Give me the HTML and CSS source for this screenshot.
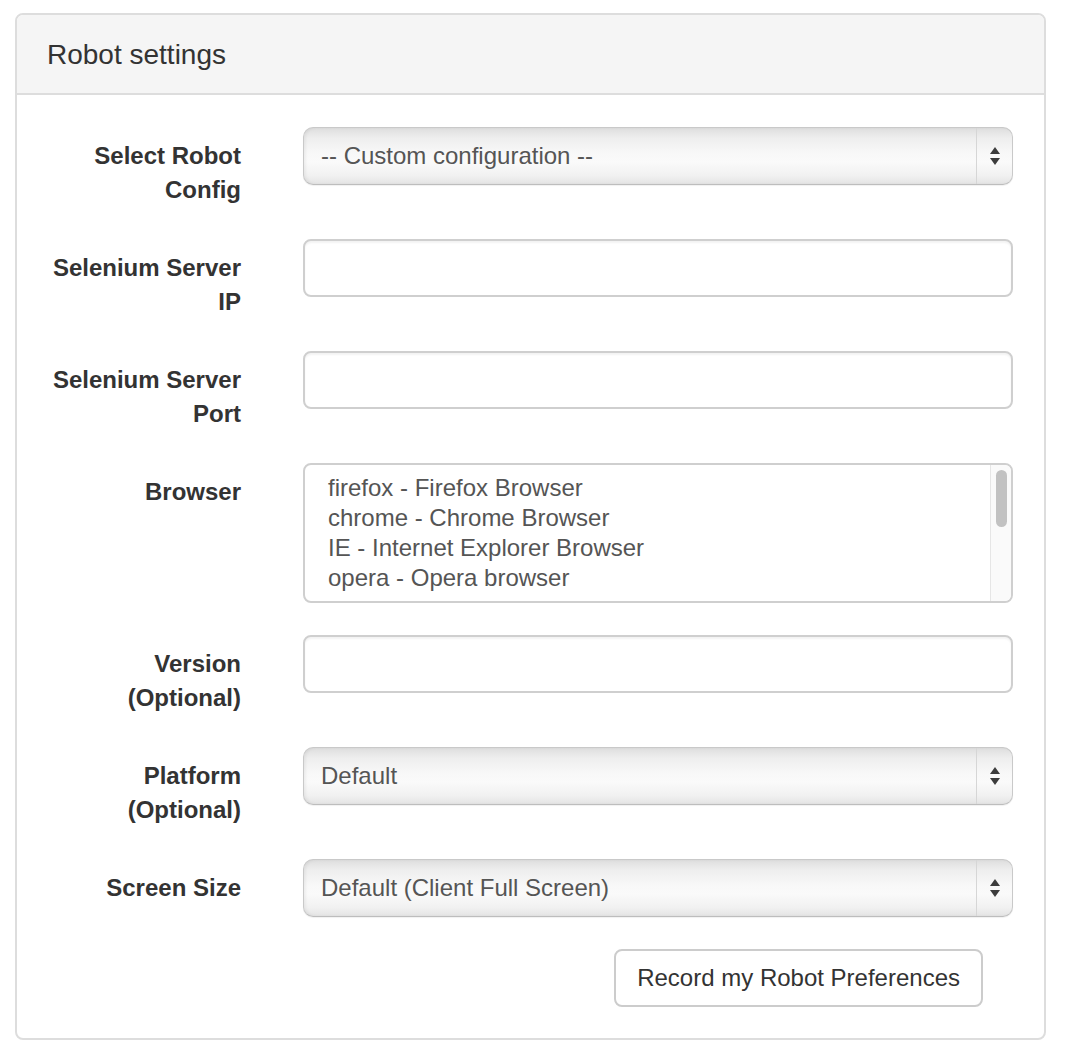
FILE: index.html
```html
<!DOCTYPE html>
<html lang="en">
<head>
<meta charset="utf-8">
<title>Robot settings</title>
<link rel="stylesheet" href="styles.css">
</head>
<body>
<div class="panel">
  <div class="panel-heading"><h3 class="panel-title">Robot settings</h3></div>
  <form class="panel-body">
    <div class="form-row">
      <label class="form-label">Select Robot Config</label>
      <div class="fake-select">
        <span class="select-value">-- Custom configuration --</span>
        <span class="select-arrows"><svg width="12" height="20" viewBox="0 0 12 20"><polygon points="6,0 11,7 1,7" fill="#3c3c3c"/><polygon points="1,11 11,11 6,18" fill="#3c3c3c"/></svg></span>
      </div>
    </div>
    <div class="form-row">
      <label class="form-label">Selenium Server IP</label>
      <input class="text-input" type="text">
    </div>
    <div class="form-row">
      <label class="form-label">Selenium Server Port</label>
      <input class="text-input" type="text">
    </div>
    <div class="form-row">
      <label class="form-label">Browser</label>
      <div class="listbox">
        <div class="listbox-options">
          <div class="option">firefox - Firefox Browser</div>
          <div class="option">chrome - Chrome Browser</div>
          <div class="option">IE - Internet Explorer Browser</div>
          <div class="option">opera - Opera browser</div>
        </div>
        <div class="listbox-scrollbar"><div class="scroll-thumb"></div></div>
      </div>
    </div>
    <div class="form-row">
      <label class="form-label">Version (Optional)</label>
      <input class="text-input" type="text">
    </div>
    <div class="form-row">
      <label class="form-label">Platform (Optional)</label>
      <div class="fake-select">
        <span class="select-value">Default</span>
        <span class="select-arrows"><svg width="12" height="20" viewBox="0 0 12 20"><polygon points="6,0 11,7 1,7" fill="#3c3c3c"/><polygon points="1,11 11,11 6,18" fill="#3c3c3c"/></svg></span>
      </div>
    </div>
    <div class="form-row">
      <label class="form-label">Screen Size</label>
      <div class="fake-select">
        <span class="select-value">Default (Client Full Screen)</span>
        <span class="select-arrows"><svg width="12" height="20" viewBox="0 0 12 20"><polygon points="6,0 11,7 1,7" fill="#3c3c3c"/><polygon points="1,11 11,11 6,18" fill="#3c3c3c"/></svg></span>
      </div>
    </div>
    <div class="button-row">
      <button class="btn" type="button">Record my Robot Preferences</button>
    </div>
  </form>
</div>
</body>
</html>
```
FILE: styles.css
```css
* { box-sizing: border-box; }

body {
  margin: 0;
  background: #ffffff;
  font-family: "Liberation Sans", Arial, Helvetica, sans-serif;
  color: #333333;
}

.panel {
  width: 1031px;
  margin: 13px 0 0 15px;
  border: 2px solid #dddddd;
  border-radius: 8px;
  background: #ffffff;
  overflow: hidden;
}

.panel-heading {
  height: 80px;
  padding: 0 30px;
  display: flex;
  align-items: center;
  background: #f5f5f5;
  border-bottom: 2px solid #dddddd;
}

.panel-title {
  margin: 0;
  padding-top: 2px;
  font-size: 28px;
  font-weight: normal;
  color: #333333;
  line-height: 1.1;
}

.panel-body {
  margin: 0;
  padding: 32px 31px 31px 30px;
}

.form-row {
  display: grid;
  grid-template-columns: 194px 1fr;
  column-gap: 62px;
  align-items: start;
  margin-bottom: 32px;
}

.form-label {
  padding-top: 12px;
  text-align: right;
  font-weight: bold;
  font-size: 24px;
  line-height: 34px;
  color: #333333;
}

.text-input {
  display: block;
  width: 100%;
  height: 58px;
  margin: 0;
  padding: 0 18px;
  font: inherit;
  font-size: 24px;
  color: #555555;
  background: #ffffff;
  border: 2px solid #cfcfcf;
  border-radius: 8px;
  box-shadow: inset 0 2px 2px rgba(0, 0, 0, 0.05);
}

.fake-select {
  display: flex;
  height: 58px;
  border: 1px solid #c9c9c9;
  border-bottom-color: #bdbdbd;
  border-radius: 10px;
  background: linear-gradient(to bottom, #dedede 0%, #eeeeee 18%, #f8f8f8 45%, #fafafa 60%, #f1f1f1 85%, #e4e4e4 100%);
  box-shadow: inset 2px 0 3px rgba(0, 0, 0, 0.05), 0 1px 1px rgba(0, 0, 0, 0.06);
}

.select-value {
  flex: 1;
  display: flex;
  align-items: center;
  padding-left: 17px;
  font-size: 24px;
  color: #555555;
}

.select-arrows {
  width: 36px;
  display: flex;
  align-items: center;
  justify-content: center;
  border-left: 1px solid #d6d6d6;
  padding-top: 1px;
}

.select-arrows svg { display: block; }

.listbox {
  display: flex;
  height: 140px;
  border: 2px solid #cfcfcf;
  border-radius: 8px;
  background: #ffffff;
  overflow: hidden;
}

.listbox-options {
  flex: 1;
  height: 128px;
  padding: 8px 0 0 23px;
  overflow: hidden;
  font-size: 24px;
  line-height: 30px;
  color: #555555;
}

.option { white-space: nowrap; }

.listbox-scrollbar {
  width: 21px;
  background: #fafafa;
  border-left: 1px solid #e6e6e6;
  padding: 5px 0 0 5px;
}

.scroll-thumb {
  width: 11px;
  height: 57px;
  border-radius: 6px;
  background: #c2c2c2;
}

.button-row {
  display: flex;
  justify-content: flex-end;
  padding-right: 30px;
}

.btn {
  height: 58px;
  padding: 0 21px;
  margin: 0;
  font: inherit;
  font-size: 24px;
  color: #333333;
  background: #ffffff;
  border: 2px solid #cccccc;
  border-radius: 8px;
  cursor: pointer;
}
```
